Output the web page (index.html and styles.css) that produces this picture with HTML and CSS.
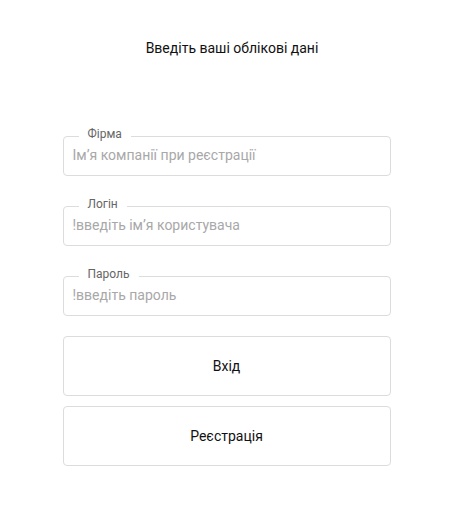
FILE: index.html
```html
<!DOCTYPE html>
<html lang="uk">
<head>
    <meta charset="UTF-8">
    <meta name="viewport" content="width=device-width, initial-scale=1.0">
    <title>Вхід</title>
    <link rel="stylesheet" href="styles.css">
</head>
<body>
    <div class="container">
        <h2>Введіть ваші облікові дані</h2>

        <form class="login-form" onsubmit="return false">
            <!-- Company -->
            <fieldset class="field">
                <legend>Фірма</legend>
                <input type="text" placeholder="Ім’я компанії при реєстрації">
            </fieldset>

            <!-- Username -->
            <fieldset class="field">
                <legend>Логін</legend>
                <input type="text" placeholder="!введіть ім’я користувача">
            </fieldset>

            <!-- Password -->
            <fieldset class="field">
                <legend>Пароль</legend>
                <input type="password" placeholder="!введіть пароль">
            </fieldset>

            <button type="submit" class="btn">Вхід</button>
            <button type="button" class="btn">Реєстрація</button>
        </form>
    </div>
</body>
</html>
```

FILE: styles.css
```css
body {
    font-family: Roboto, 'Liberation Sans', sans-serif;
    background-color: #ffffff;
    color: #111;
    margin: 0;
}
.container {
    width: 328px;
    margin: 0 auto;
    padding-top: 40px;
}
h2 {
    font-size: 14px;
    font-weight: 400;
    line-height: 17px;
    text-align: center;
    margin: 0 0 72px;
    padding-left: 11px;
}
.login-form {
    display: flex;
    flex-direction: column;
}
.field {
    margin: 0 0 23px;
    padding: 0 9px 9px;
    border: 1px solid #dcdcdc;
    border-radius: 4px;
    min-width: 0;
}
.field:last-of-type {
    margin-bottom: 20px;
}
.field legend {
    margin-left: 6px;
    padding: 0 9px 3px;
    font-size: 12px;
    line-height: 11px;
    color: #666;
}
.field input {
    display: block;
    width: 100%;
    height: 22px;
    margin-top: 1px;
    padding: 0;
    border: none;
    outline: none;
    font-family: inherit;
    font-size: 14px;
    color: #333;
    background: transparent;
}
.field input::placeholder {
    color: #a8a8a8;
}
.btn {
    height: 60px;
    margin-bottom: 10px;
    background-color: #fff;
    border: 1px solid #dcdcdc;
    border-radius: 4px;
    font-family: inherit;
    font-size: 14px;
    color: #111;
    cursor: pointer;
}
.btn:hover {
    background-color: #f7f7f7;
}
```
